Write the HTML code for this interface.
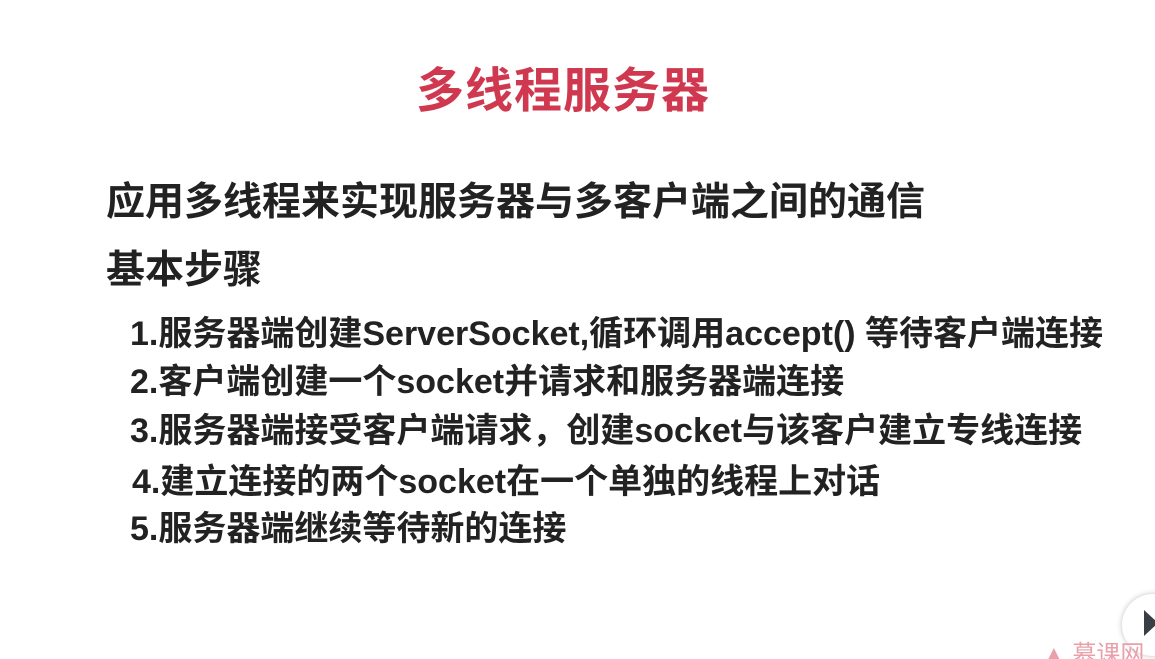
<!DOCTYPE html>
<html><head><meta charset="utf-8"><style>
html,body{margin:0;padding:0;background:#fff;width:1155px;height:659px;overflow:hidden;position:relative}
div.t{position:absolute;white-space:nowrap;font-family:"Liberation Sans","Noto Sans CJK SC",sans-serif;color:#222;line-height:1}
</style></head><body>
<div class="t" style="left:416px;top:68px;font-size:48px;color:#d0384f;font-weight:bold;letter-spacing:1px">多线程服务器</div>
<div class="t" style="left:106px;top:183px;font-size:39px;font-weight:bold">应用多线程来实现服务器与多客户端之间的通信</div>
<div class="t" style="left:106px;top:251px;font-size:39px;font-weight:bold">基本步骤</div>
<div class="t" style="left:130px;top:317px;font-size:34px;font-weight:bold">1.服务器端创建ServerSocket,循环调用accept() 等待客户端连接</div>
<div class="t" style="left:130px;top:365px;font-size:34px;font-weight:bold">2.客户端创建一个socket并请求和服务器端连接</div>
<div class="t" style="left:130px;top:414px;font-size:34px;font-weight:bold">3.服务器端接受客户端请求，创建socket与该客户建立专线连接</div>
<div class="t" style="left:132px;top:465px;font-size:34px;font-weight:bold">4.建立连接的两个socket在一个单独的线程上对话</div>
<div class="t" style="left:130px;top:512px;font-size:34px;font-weight:bold">5.服务器端继续等待新的连接</div>
<div style="position:absolute;left:1122px;top:594px;width:62px;height:62px;border-radius:50%;background:#fff;box-shadow:0 0 6px rgba(0,0,0,.25)"></div>
<div style="position:absolute;left:1144px;top:610px;width:0;height:0;border-top:13px solid transparent;border-bottom:13px solid transparent;border-left:14px solid #3a3f47"></div>
<div class="t" style="left:1042px;top:643px;font-size:24px;color:#e8a0aa">▲ 慕课网</div>
</body></html>
